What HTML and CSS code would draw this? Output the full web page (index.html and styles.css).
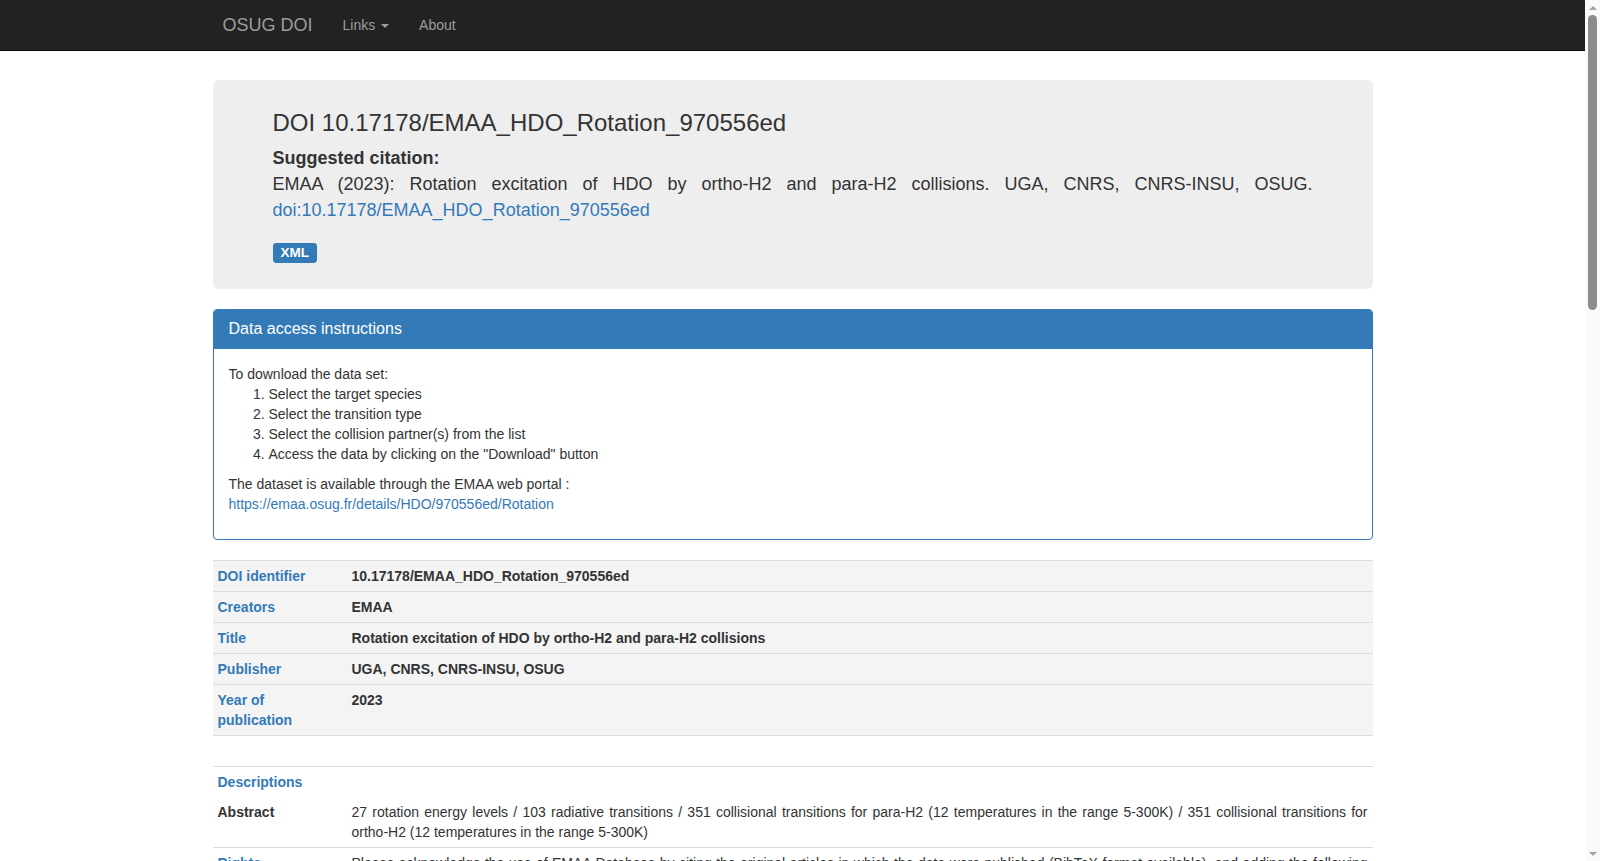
FILE: index.html
```html
<!DOCTYPE html>
<html lang="en">
<head>
<meta charset="utf-8">
<title>OSUG DOI</title>
<link rel="stylesheet" href="styles.css">
</head>
<body>
<div class="page">
<nav class="navbar">
  <div class="nav-container">
    <a class="brand" href="#">OSUG DOI</a>
    <ul class="nav">
      <li><a href="#">Links <span class="caret"></span></a></li>
      <li><a href="#">About</a></li>
    </ul>
  </div>
</nav>

<main class="main">
  <section class="jumbotron">
    <h3 class="doi-title">DOI 10.17178/EMAA_HDO_Rotation_970556ed</h3>
    <p class="citation"><strong>Suggested citation:</strong><br>EMAA (2023): Rotation excitation of HDO by ortho-H2 and para-H2 collisions. UGA, CNRS, CNRS-INSU, OSUG. <a href="#">doi:10.17178/EMAA_HDO_Rotation_970556ed</a></p>
    <div class="labels"><a class="label" href="#">XML</a></div>
  </section>

  <section class="panel">
    <div class="panel-heading">Data access instructions</div>
    <div class="panel-body">
      <div>To download the data set:</div>
      <ol class="steps">
        <li>Select the target species</li>
        <li>Select the transition type</li>
        <li>Select the collision partner(s) from the list</li>
        <li>Access the data by clicking on the "Download" button</li>
      </ol>
      <p class="portal">The dataset is available through the EMAA web portal :<br><a href="#">https://emaa.osug.fr/details/HDO/970556ed/Rotation</a></p>
    </div>
  </section>

  <table class="meta">
    <tbody>
      <tr class="shaded"><th class="key">DOI identifier</th><td>10.17178/EMAA_HDO_Rotation_970556ed</td></tr>
      <tr class="shaded"><th class="key">Creators</th><td>EMAA</td></tr>
      <tr class="shaded"><th class="key">Title</th><td>Rotation excitation of HDO by ortho-H2 and para-H2 collisions</td></tr>
      <tr class="shaded"><th class="key">Publisher</th><td>UGA, CNRS, CNRS-INSU, OSUG</td></tr>
      <tr class="shaded"><th class="key">Year of publication</th><td>2023</td></tr>
      <tr><th class="key">&nbsp;</th><td></td></tr>
      <tr><th class="key">Descriptions</th><td></td></tr>
      <tr class="noborder"><th class="key dark">Abstract</th><td class="plain">27 rotation energy levels / 103 radiative transitions / 351 collisional transitions for para-H2 (12 temperatures in the range 5-300K) / 351 collisional transitions for ortho-H2 (12 temperatures in the range 5-300K)</td></tr>
      <tr><th class="key">Rights</th><td class="plain">Please acknowledge the use of EMAA Database by citing the original articles in which the data were published (BibTeX format available), and adding the following statement to your acknowledgements: "This work has made use of the Excitation of Molecules and Atoms for Astrophysics (EMAA) database, operated at Université Grenoble Alpes, CNRS, CNRS-INSU and OSUG (https://emaa.osug.fr)."</td></tr>
      <tr><th class="key">&nbsp;</th><td></td></tr>
      <tr><th class="key">Subjects</th><td></td></tr>
      <tr class="noborder"><th class="key dark">Keyword</th><td class="plain">Astrophysics</td></tr>
      <tr class="noborder"><th class="key dark">Keyword</th><td class="plain">Molecular collisions</td></tr>
      <tr><th class="key">Language</th><td class="plain">en</td></tr>
      <tr><th class="key">Resource type</th><td class="plain">Dataset</td></tr>
    </tbody>
  </table>
</main>
</div>

<div class="scrollbar" aria-hidden="true">
  <div class="sb-arrow"><span class="sb-up"></span></div>
  <div class="sb-thumb"></div>
  <div class="sb-fill"></div>
  <div class="sb-arrow"><span class="sb-down"></span></div>
</div>
</body>
</html>
```
FILE: styles.css
```css
* { box-sizing: border-box; }

html {
  overflow: hidden;
}

html, body {
  margin: 0;
  padding: 0;
}

body {
  font-family: "Liberation Sans", Arial, Helvetica, sans-serif;
  font-size: 14px;
  line-height: 20px;
  color: #333;
  background: #fff;
  display: flex;
  align-items: flex-start;
}

.page {
  flex: 1;
  min-width: 0;
}

a { color: #337ab7; text-decoration: none; }

/* Scrollbar drawing */
.scrollbar {
  flex: none;
  width: 15px;
  height: 100vh;
  position: sticky;
  top: 0;
  background: #fafafa;
  display: flex;
  flex-direction: column;
  align-items: center;
}

.sb-arrow {
  width: 15px;
  height: 15px;
  display: flex;
  align-items: center;
  justify-content: center;
}

.sb-up,
.sb-down {
  width: 0;
  height: 0;
  border-left: 4px solid transparent;
  border-right: 4px solid transparent;
}

.sb-up { border-bottom: 4px solid #a3a3a3; }
.sb-down { border-top: 4px solid #a3a3a3; }

.sb-thumb {
  width: 9px;
  height: 295px;
  border-radius: 4.5px;
  background: #8c8c8c;
}

.sb-fill { flex: 1; }

/* Navbar */
.navbar {
  background: #222;
  border-bottom: 1px solid #080808;
  height: 51px;
  margin-bottom: 29px;
}

.nav-container {
  width: 1170px;
  margin: 0 auto;
  padding: 0 15px;
  display: flex;
  align-items: flex-start;
}

.brand {
  display: block;
  margin-left: -15px;
  padding: 15px;
  height: 50px;
  font-size: 18px;
  line-height: 20px;
  color: #9d9d9d;
}

.nav {
  list-style: none;
  margin: 0;
  padding: 0;
  display: flex;
}

.nav a {
  display: block;
  padding: 15px;
  line-height: 20px;
  color: #9d9d9d;
}

.caret {
  display: inline-block;
  width: 0;
  height: 0;
  margin-left: 2px;
  vertical-align: middle;
  border-top: 4px solid;
  border-right: 4px solid transparent;
  border-left: 4px solid transparent;
}

/* Main */
.main {
  width: 1160px;
  margin: 0 auto;
}

.jumbotron {
  background: #eee;
  border-radius: 6px;
  padding: 30px 60px 26px;
  margin-bottom: 20px;
}

.doi-title {
  margin: 0 0 10px;
  font-size: 24px;
  line-height: 26.4px;
  font-weight: normal;
  color: #333;
}

.citation {
  margin: 0;
  font-size: 18px;
  line-height: 25.714px;
  text-align: justify;
}

.citation strong { font-weight: bold; }

.labels {
  display: flex;
  margin-top: 19.5px;
}

.label {
  display: inline-block;
  background: #337ab7;
  color: #fff;
  font-size: 13.5px;
  font-weight: bold;
  line-height: 1;
  padding: 2.7px 8.1px 4.05px;
  border-radius: 3.4px;
}

/* Panel */
.panel {
  border: 1px solid #337ab7;
  border-radius: 4px;
  margin-bottom: 20px;
  overflow: hidden;
}

.panel-heading {
  background: #337ab7;
  color: #fff;
  font-size: 16px;
  line-height: 19px;
  padding: 9px 15px 11px;
}

.panel-body {
  padding: 15px;
}

.steps {
  margin: 0 0 10px;
  padding-left: 40px;
}

.portal {
  margin: 0 0 10px;
}

/* Table */
.meta {
  width: 100%;
  border-collapse: collapse;
  border-spacing: 0;
  margin-bottom: 20px;
}

.meta th,
.meta td {
  padding: 5px;
  line-height: 20px;
  vertical-align: top;
  border-top: 1px solid #ddd;
  text-align: left;
}

.meta th.key {
  width: 134px;
  color: #337ab7;
  font-weight: bold;
}

.meta th.dark { color: #333; }

.meta td {
  font-weight: bold;
  color: #333;
}

.meta td.plain {
  font-weight: normal;
  text-align: justify;
}

.meta tr.shaded th,
.meta tr.shaded td {
  background: #f4f4f4;
}

.meta tr.noborder th,
.meta tr.noborder td {
  border-top: 0;
}
```
